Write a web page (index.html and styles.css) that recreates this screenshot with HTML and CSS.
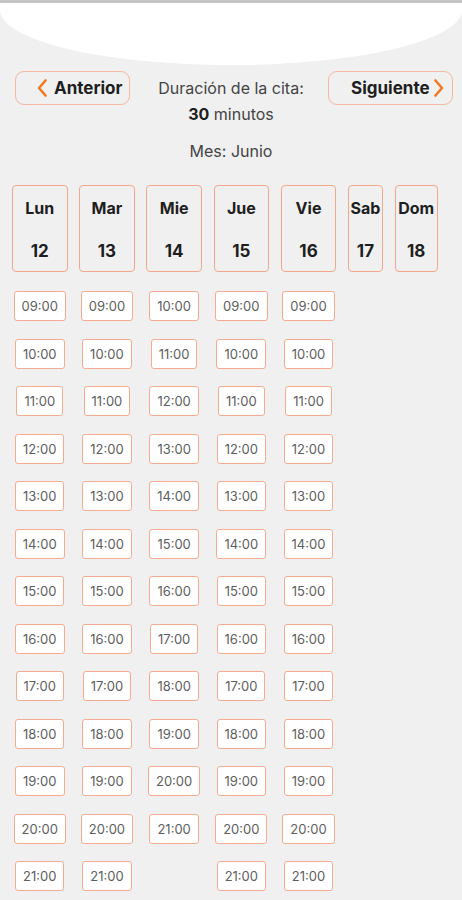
FILE: index.html
```html
<!DOCTYPE html>
<html lang="es">
<head>
<meta charset="utf-8">
<title>Citas</title>
<link rel="stylesheet" href="styles.css">
</head>
<body>
<div class="topbar"></div>
<div class="hero-wrap"><div class="hero"></div></div>

<div class="nav">
  <button class="navbtn prev">
    <svg class="chev" viewBox="0 0 10 18" width="10" height="18"><path d="M8.5 1.5 L2 9 L8.5 16.5" fill="none" stroke="#f07a22" stroke-width="2.6" stroke-linecap="round" stroke-linejoin="round"/></svg>
    <span>Anterior</span>
  </button>
  <div class="duration">
    <div>Duración de la cita:</div>
    <div><b>30</b> minutos</div>
  </div>
  <button class="navbtn next">
    <span>Siguiente</span>
    <svg class="chev" viewBox="0 0 10 18" width="10" height="18"><path d="M1.5 1.5 L8 9 L1.5 16.5" fill="none" stroke="#f07a22" stroke-width="2.6" stroke-linecap="round" stroke-linejoin="round"/></svg>
  </button>
</div>

<div class="month">Mes: Junio</div>

<div class="days">
  <div class="day">
    <div class="card"><span>Lun</span><span class="num">12</span></div>
    <div class="slot">09:00</div><div class="slot">10:00</div><div class="slot">11:00</div><div class="slot">12:00</div><div class="slot">13:00</div><div class="slot">14:00</div><div class="slot">15:00</div><div class="slot">16:00</div><div class="slot">17:00</div><div class="slot">18:00</div><div class="slot">19:00</div><div class="slot">20:00</div><div class="slot">21:00</div>
  </div>
  <div class="day">
    <div class="card"><span>Mar</span><span class="num">13</span></div>
    <div class="slot">09:00</div><div class="slot">10:00</div><div class="slot">11:00</div><div class="slot">12:00</div><div class="slot">13:00</div><div class="slot">14:00</div><div class="slot">15:00</div><div class="slot">16:00</div><div class="slot">17:00</div><div class="slot">18:00</div><div class="slot">19:00</div><div class="slot">20:00</div><div class="slot">21:00</div>
  </div>
  <div class="day">
    <div class="card"><span>Mie</span><span class="num">14</span></div>
    <div class="slot">10:00</div><div class="slot">11:00</div><div class="slot">12:00</div><div class="slot">13:00</div><div class="slot">14:00</div><div class="slot">15:00</div><div class="slot">16:00</div><div class="slot">17:00</div><div class="slot">18:00</div><div class="slot">19:00</div><div class="slot">20:00</div><div class="slot">21:00</div>
  </div>
  <div class="day">
    <div class="card"><span>Jue</span><span class="num">15</span></div>
    <div class="slot">09:00</div><div class="slot">10:00</div><div class="slot">11:00</div><div class="slot">12:00</div><div class="slot">13:00</div><div class="slot">14:00</div><div class="slot">15:00</div><div class="slot">16:00</div><div class="slot">17:00</div><div class="slot">18:00</div><div class="slot">19:00</div><div class="slot">20:00</div><div class="slot">21:00</div>
  </div>
  <div class="day">
    <div class="card"><span>Vie</span><span class="num">16</span></div>
    <div class="slot">09:00</div><div class="slot">10:00</div><div class="slot">11:00</div><div class="slot">12:00</div><div class="slot">13:00</div><div class="slot">14:00</div><div class="slot">15:00</div><div class="slot">16:00</div><div class="slot">17:00</div><div class="slot">18:00</div><div class="slot">19:00</div><div class="slot">20:00</div><div class="slot">21:00</div>
  </div>
  <div class="day sab">
    <div class="card"><span>Sab</span><span class="num">17</span></div>
  </div>
  <div class="day dom">
    <div class="card"><span>Dom</span><span class="num">18</span></div>
  </div>
</div>
</body>
</html>
```

FILE: styles.css
```css
* { box-sizing: border-box; }
html, body { margin: 0; padding: 0; }
body {
  width: 462px;
  height: 900px;
  overflow: hidden;
  background: #f0f0f0;
  font-family: Inter, "Liberation Sans", Arial, sans-serif;
  color: #222;
}
.topbar { height: 3px; background: #c4c4c4; }
.hero-wrap { overflow: hidden; }
.hero {
  height: 62px;
  background: #ffffff;
  border-radius: 0 0 231px 231px / 0 0 55px 55px;
}
.nav {
  display: grid;
  grid-template-columns: 1fr auto 1fr;
  align-items: start;
  margin-top: 6px;
}
.navbtn {
  display: flex;
  align-items: center;
  height: 34px;
  border: 1px solid #f5b8a0;
  border-radius: 9px;
  background: transparent;
  font-family: inherit;
  font-size: 17px;
  font-weight: 700;
  color: #1e1e1e;
  padding: 0;
  cursor: pointer;
}
.navbtn.prev { justify-self: start; margin-left: 15px; width: 115px; padding-left: 21px; gap: 7px; }
.navbtn.next { justify-self: end; margin-right: 9px; width: 125px; padding-left: 22px; gap: 4px; }
.chev { display: block; flex: none; }
.duration {
  margin-top: 4px;
  text-align: center;
  font-size: 16px;
  line-height: 26px;
  color: #444;
}
.duration b { color: #1e1e1e; font-weight: 700; }
.month {
  margin-top: 11px;
  text-align: center;
  font-size: 16px;
  line-height: 26px;
  color: #444;
}
.days {
  display: flex;
  align-items: flex-start;
  gap: 11.7px;
  padding-left: 12px;
  margin-top: 21px;
}
.day {
  width: 55.5px;
  display: flex;
  flex-direction: column;
  align-items: center;
  gap: 17.5px;
}
.day.sab { width: 35px; }
.day.dom { width: 43px; }
.card {
  width: 100%;
  height: 87px;
  border: 1px solid #f3a88c;
  border-radius: 4px;
  display: flex;
  flex-direction: column;
  justify-content: space-between;
  align-items: center;
  padding: 12px 0 10px;
  margin-bottom: 1.5px;
  font-size: 16px;
  font-weight: 700;
  line-height: 20px;
  color: #1e1e1e;
  white-space: nowrap;
}
.card .num { font-size: 17px; }
.slot {
  height: 30px;
  line-height: 28px;
  padding: 0 7px;
  background: #fff;
  border: 1px solid #f4ab90;
  border-radius: 3px;
  font-size: 13px;
  color: #5e5e5e;
}
```
